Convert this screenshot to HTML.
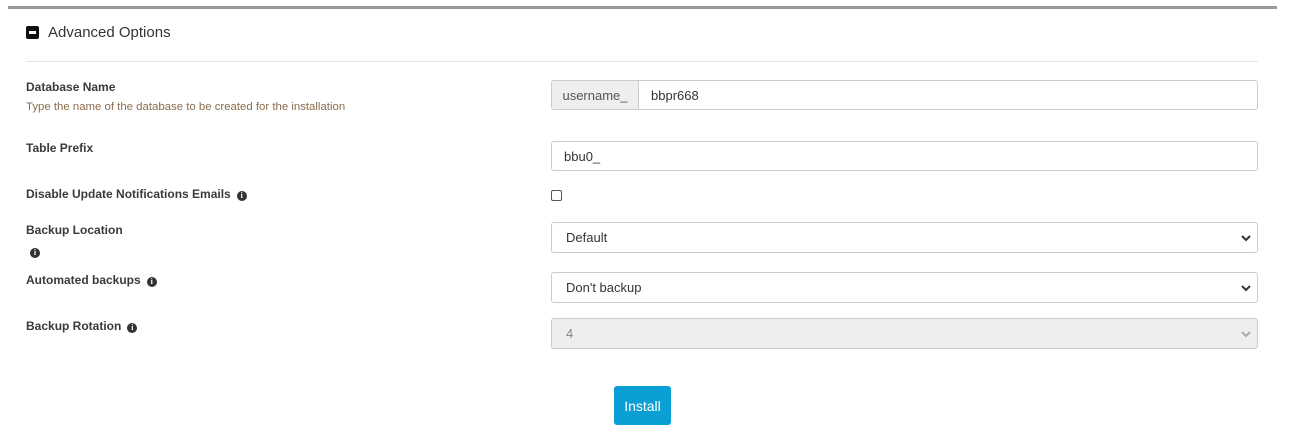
<!DOCTYPE html>
<html><head><meta charset="utf-8"><style>
*{margin:0;padding:0;box-sizing:border-box}
body{width:1290px;height:429px;background:#fff;position:relative;font-family:"Liberation Sans",sans-serif;color:#333;overflow:hidden}
.a{position:absolute}
.lbl{position:absolute;left:26px;font-size:12px;font-weight:bold;color:#3a3a3a;line-height:14px;white-space:nowrap}
.info{display:inline-block;width:10px;height:10px;border-radius:50%;background:#333;color:#fff;font-size:8px;line-height:10px;text-align:center;font-weight:bold;font-family:"Liberation Serif",serif;vertical-align:0;margin-left:6px}
.box{position:absolute;left:551px;width:707px;border:1px solid #ccc;border-radius:3px;background:#fff;font-size:13px;color:#333;padding-left:14px;display:flex;align-items:center}
.chev{position:absolute;right:6px;top:50%;margin-top:-4px}
</style></head><body>
<div class="a" style="left:8px;top:6px;width:1269px;height:3px;background:#999"></div>
<div class="a" style="left:26px;top:26px;width:13px;height:13px;background:#111;border-radius:2px"><div style="position:absolute;left:3px;top:5px;width:7px;height:3px;background:#fff"></div></div>
<div class="a" style="left:48px;top:24px;font-size:15px;color:#333;line-height:18px">Advanced Options</div>
<div class="a" style="left:26px;top:61px;width:1232px;height:1px;background:#e5e5e5"></div>

<div class="lbl" style="top:80px">Database Name</div>
<div class="a" style="left:26px;top:100px;font-size:11.4px;color:#8a6d4b;line-height:14px">Type the name of the database to be created for the installation</div>
<div class="box" style="top:80px;height:30px;padding-left:0">
<div style="width:87px;height:28px;background:#eee;border-right:1px solid #ccc;display:flex;align-items:center;justify-content:center;color:#555;border-radius:3px 0 0 3px">username_</div>
<div style="padding-left:12px">bbpr668</div></div>

<div class="lbl" style="top:187px">Disable Update Notifications Emails<span class="info">i</span></div>
<div class="lbl" style="top:141px">Table Prefix</div>
<div class="box" style="top:141px;height:30px;padding-left:12px">bbu0_</div>

<div class="a" style="left:551px;top:190px;width:11px;height:11px;border:1px solid #555;border-radius:2px"></div>

<div class="lbl" style="top:223px">Backup Location</div>
<div class="lbl" style="top:244px"><span class="info" style="margin-left:4px">i</span></div>
<div class="box" style="top:222px;height:31px">Default<svg class="chev" width="10" height="8" viewBox="0 0 10 8"><path d="M1 2l4 4 4-4" stroke="#333" stroke-width="2" fill="none"/></svg></div>

<div class="lbl" style="top:273px">Automated backups<span class="info">i</span></div>
<div class="box" style="top:272px;height:31px">Don't backup<svg class="chev" width="10" height="8" viewBox="0 0 10 8"><path d="M1 2l4 4 4-4" stroke="#333" stroke-width="2" fill="none"/></svg></div>

<div class="lbl" style="top:319px">Backup Rotation<span class="info">i</span></div>
<div class="box" style="top:318px;height:31px;background:#eee;color:#888">4<svg class="chev" width="10" height="8" viewBox="0 0 10 8"><path d="M1 2l4 4 4-4" stroke="#aaa" stroke-width="2" fill="none"/></svg></div>

<div class="a" style="left:614px;top:386px;width:57px;height:39px;background:#0aa0d6;border-radius:3px;color:#fff;font-size:14px;display:flex;align-items:center;justify-content:center">Install</div>
</body></html>
